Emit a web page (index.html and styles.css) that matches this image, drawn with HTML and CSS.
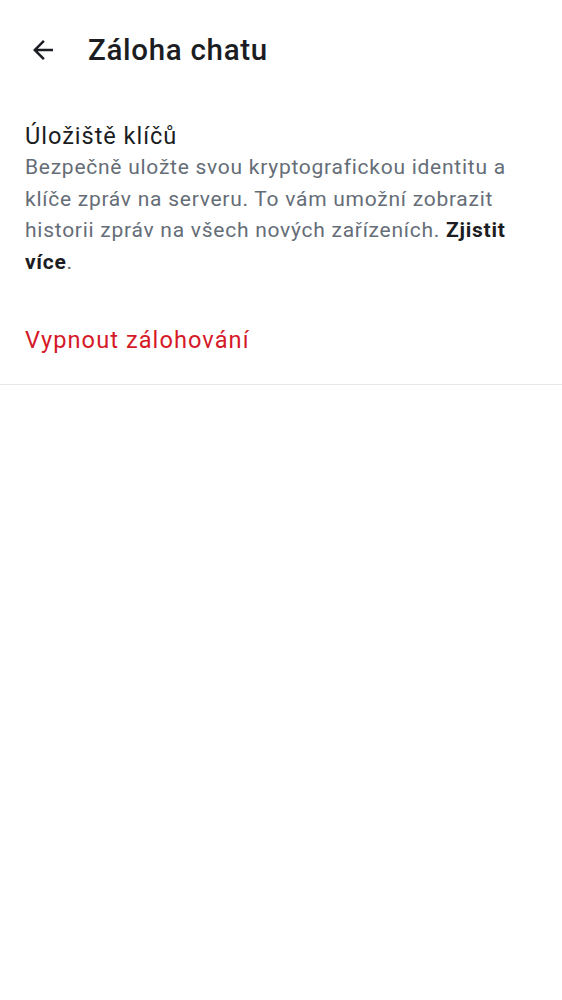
FILE: index.html
```html
<!DOCTYPE html>
<html lang="cs">
<head>
<meta charset="utf-8">
<link rel="stylesheet" href="styles.css">
</head>
<body>
<header class="topbar">
  <button class="back" aria-label="Zpět">
    <svg width="30" height="30" viewBox="0 0 24 24"><path d="M20 11H7.83l5.59-5.59L12 4l-8 8 8 8 1.41-1.41L7.83 13H20v-2z" fill="#1b1d22"/></svg>
  </button>
  <h1 class="title">Záloha chatu</h1>
</header>
<section class="section">
  <div class="item">
    <div class="item-title">Úložiště klíčů</div>
    <p class="item-desc">Bezpečně uložte svou kryptografickou identitu a klíče zpráv na serveru. To vám umožní zobrazit historii zpráv na všech nových zařízeních. <b>Zjistit více</b>.</p>
  </div>
  <div class="action">Vypnout zálohování</div>
</section>
</body>
</html>
```
FILE: styles.css
```css
html, body { margin: 0; padding: 0; background: #fff; }
body { font-family: Roboto, "Noto Sans", sans-serif; color: #1b1d22; }
.topbar { display: flex; align-items: center; height: 100px; padding-left: 28px; }
.back { border: 0; background: none; padding: 0; width: 30px; height: 30px; display: flex; align-items: center; justify-content: center; margin-right: 30px; }
.title { margin: 0; font-size: 29.5px; line-height: 36px; font-weight: 500; letter-spacing: 0.7px; }
.section { border-bottom: 1px solid #e6e8ec; }
.item { padding: 20px 25px 0; }
.item-title { font-size: 23.6px; line-height: 32px; letter-spacing: 0.95px; }
.item-desc { margin: 0; font-size: 21px; line-height: 31.5px; letter-spacing: 0.74px; color: #656d77; }
.item-desc b { color: #1b1d22; font-weight: 700; }
.action { padding: 46px 25px 28px; font-size: 23.6px; line-height: 32px; letter-spacing: 1.07px; color: #d51928; }
```
